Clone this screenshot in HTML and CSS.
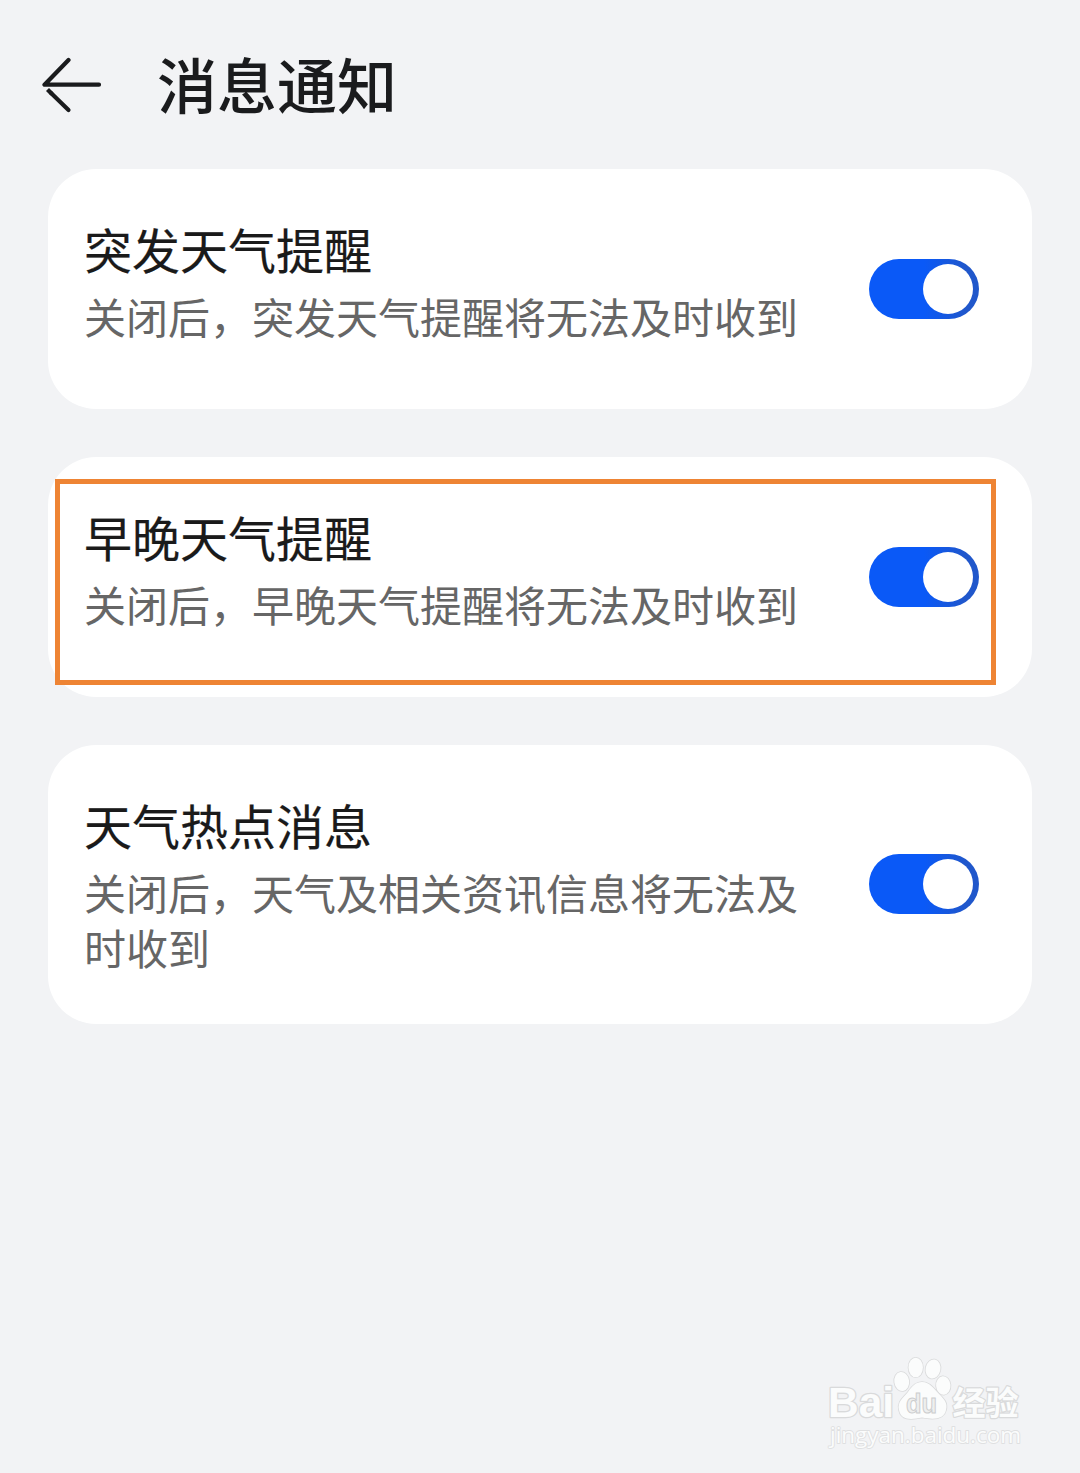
FILE: index.html
```html
<!DOCTYPE html>
<html lang="zh-CN">
<head>
<meta charset="utf-8">
<title>消息通知</title>
<link rel="stylesheet" href="styles.css">
</head>
<body>
<div class="page">
  <header class="header">
    <svg class="back" viewBox="0 0 60 56" fill="none" stroke="#1a1b1d" stroke-width="4.2" stroke-linecap="round" stroke-linejoin="round">
      <path d="M26.5 3 L2.5 27.7 H57"/>
      <path stroke-linecap="butt" d="M5.5 32.5 L10 37"/>
      <path d="M9 36 L26.5 53"/>
    </svg>
    <h1 class="title">消息通知</h1>
  </header>
  <main class="cards">
    <section class="card">
      <div class="info">
        <h2 class="name">突发天气提醒</h2>
        <p class="desc">关闭后，突发天气提醒将无法及时收到</p>
      </div>
      <span class="switch"><span class="knob"></span></span>
    </section>
    <section class="card">
      <div class="info">
        <h2 class="name">早晚天气提醒</h2>
        <p class="desc">关闭后，早晚天气提醒将无法及时收到</p>
      </div>
      <span class="switch"><span class="knob"></span></span>
      <span class="marker"></span>
    </section>
    <section class="card card-tall">
      <div class="info">
        <h2 class="name">天气热点消息</h2>
        <p class="desc">关闭后，天气及相关资讯信息将无法及时收到</p>
      </div>
      <span class="switch"><span class="knob"></span></span>
    </section>
  </main>
  <svg class="watermark" viewBox="0 0 230 120">
    <g class="wm-shape">
      <ellipse cx="91.7" cy="41.5" rx="7.4" ry="9.6" transform="rotate(-8 91.7 41.5)"/>
      <ellipse cx="105.7" cy="27.5" rx="7.2" ry="9.8"/>
      <ellipse cx="123" cy="29" rx="7.4" ry="9.6" transform="rotate(12 123 29)"/>
      <ellipse cx="133.3" cy="45.5" rx="7.2" ry="9.2" transform="rotate(-5 133.3 45.5)"/>
      <path d="M112 42 C120 42 124 49 129 54 C134 59 138 63 136 70 C134 79 125 80 112 77.5 C100 80 91 80 89 70 C87 62 93 58 98 52 C102 46 106 42 112 42 Z"/>
    </g>
    <text class="wm-latin" x="18" y="77" textLength="66" lengthAdjust="spacingAndGlyphs">Bai</text>
    <text class="wm-du" x="96" y="73" textLength="31" lengthAdjust="spacingAndGlyphs">du</text>
    <text class="wm-cjk" x="142.5" y="74.5" textLength="66" lengthAdjust="spacingAndGlyphs">经验</text>
    <text class="wm-url" x="20" y="103" textLength="191" lengthAdjust="spacingAndGlyphs">jingyan.baidu.com</text>
  </svg>
</div>
</body>
</html>
```
FILE: styles.css
```css
* { box-sizing: border-box; margin: 0; padding: 0; }

body {
  background: #f2f3f5;
  font-family: "Noto Sans CJK SC", sans-serif;
}

.page {
  position: relative;
  height: 1473px;
  overflow: hidden;
}

.header {
  display: flex;
  align-items: center;
  gap: 55px;
  height: 169px;
  padding: 0 42px;
}

.back { width: 60px; height: 56px; }

.title {
  padding-bottom: 4px;
  font-size: 60px;
  font-weight: 500;
  line-height: 80px;
  color: #1a1b1d;
}

.cards {
  display: flex;
  flex-direction: column;
  gap: 48px;
  padding: 0 48px;
}

.card {
  position: relative;
  display: flex;
  align-items: center;
  justify-content: space-between;
  height: 240px;
  padding: 0 53px 0 36px;
  border-radius: 48px;
  background: #fff;
}

.card-tall {
  height: 279px;
  padding-bottom: 1px;
}

.info {
  align-self: flex-start;
  width: 720px;
  padding-top: 47px;
}

.name {
  margin-bottom: 8px;
  font-size: 48px;
  font-weight: 400;
  line-height: 64px;
  color: #1a1a1a;
  -webkit-text-stroke: 0.2px #1a1a1a;
}

.desc {
  font-size: 42px;
  line-height: 55px;
  color: #666;
}

.switch {
  display: flex;
  align-items: center;
  justify-content: flex-end;
  width: 110px;
  height: 60px;
  padding-right: 6px;
  border-radius: 30px;
  background: linear-gradient(90deg, #0a59f7 50%, #2057cb 88%);
}

.knob {
  width: 50px;
  height: 50px;
  border-radius: 50%;
  background: #fff;
}

/* highlight frame laid over the card */
.marker {
  position: absolute;
  left: 7px;
  top: 22px;
  width: 941px;
  height: 206px;
  border: 5px solid #ee8434;
}

.watermark {
  position: absolute;
  left: 810px;
  top: 1340px;
  width: 230px;
  height: 120px;
}

.wm-shape, .wm-latin, .wm-cjk, .wm-url {
  fill: #fbfcfc;
  stroke: #d9dadb;
  stroke-width: 1.6px;
  stroke-linejoin: round;
  paint-order: stroke;
}

.wm-latin {
  font: bold 42px "Liberation Sans", sans-serif;
  stroke-width: 2.6px;
}

.wm-du {
  font: bold 27px "Liberation Sans", sans-serif;
  fill: #eeefef;
  stroke: #cccdce;
  stroke-width: 1px;
}

.wm-cjk {
  font: bold 33px "Noto Sans CJK SC", sans-serif;
  stroke-width: 2.4px;
}

.wm-url {
  font: 22px "Open Sans", sans-serif;
  stroke: #dfe0e1;
  stroke-width: 1.8px;
}
```
